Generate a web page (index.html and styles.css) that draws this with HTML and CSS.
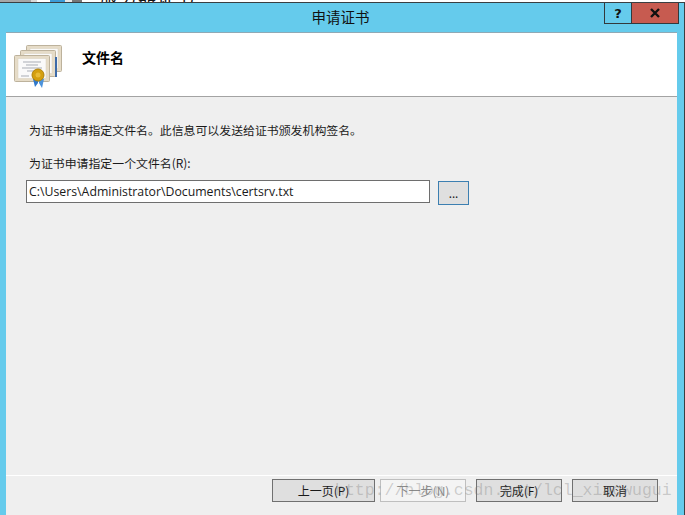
FILE: index.html
```html
<!DOCTYPE html>
<html lang="zh-CN">
<head>
    <meta charset="UTF-8">
    <meta name="viewport" content="width=device-width, initial-scale=1.0">
    <title>申请证书</title>
    <link rel="stylesheet" href="styles.css">
</head>
<body>
    <!-- sliver of the window behind the dialog -->
    <div class="backdrop">
        <span class="seg seg-gray"></span>
        <span class="seg seg-light"></span>
        <span class="seg seg-white"></span>
        <span class="seg seg-blue"></span>
        <span class="seg seg-pale"></span>
        <span class="seg seg-dark"></span>
        <span class="behind-text">服务器证书</span>
    </div>

    <div class="dialog">
        <div class="titlebar">
            <span></span>
            <div class="title">申请证书</div>
            <div class="controls">
                <div class="ctrl ctrl-help">?</div>
                <div class="ctrl ctrl-close">
                    <svg width="12" height="10" viewBox="0 0 12 10">
                        <path d="M2 1 L10 9 M10 1 L2 9" stroke="#111" stroke-width="2.4" fill="none"/>
                    </svg>
                </div>
            </div>
        </div>

        <div class="content">
            <div class="header">
                <svg class="cert-icon" width="48" height="44" viewBox="0 0 48 44">
                    <rect class="cert" x="12.5" y="1.5" width="35" height="26" rx="1"/>
                    <rect class="cert-in" x="16" y="4.5" width="28" height="20"/>
                    <rect class="cert" x="6.5" y="6.5" width="35" height="26" rx="1"/>
                    <rect class="cert-in" x="10" y="9.5" width="28" height="20"/>
                    <path d="M41 13 h2 v20 h-2 z" fill="#3d6aa8"/>
                    <rect class="cert" x="0.5" y="11.5" width="35" height="26" rx="1"/>
                    <rect class="cert-in" x="4" y="14.5" width="28" height="20"/>
                    <path d="M9 18 h18 M12 21 h12 M8 24 h20 M13 27 h9 M7 32 h8" stroke="#a9adb5" stroke-width="1"/>
                    <path d="M19 35 L21 43 L24 39 L24 33 Z" fill="#2f78cc"/>
                    <path d="M30 35 L28 44 L25 39 L25 33 Z" fill="#4c93dc"/>
                    <circle cx="24" cy="31" r="6" fill="#d49f0f" stroke="#b0820a"/>
                    <circle cx="24" cy="31" r="2.5" fill="#e8bb38"/>
                </svg>
                <div class="header-title">文件名</div>
            </div>

            <div class="body">
                <p class="intro">为证书申请指定文件名。此信息可以发送给证书颁发机构签名。</p>
                <label class="field-label" for="filename">为证书申请指定一个文件名(R):</label>
                <div class="file-row">
                    <input class="file-input" id="filename" type="text" value="C:\Users\Administrator\Documents\certsrv.txt">
                    <button class="browse-btn" type="button">...</button>
                </div>
            </div>

            <div class="footer">
                <button class="btn btn-prev" type="button">上一页(P)</button>
                <button class="btn btn-next" type="button" disabled>下一步(N)</button>
                <button class="btn btn-finish" type="button">完成(F)</button>
                <button class="btn btn-cancel" type="button">取消</button>
            </div>
        </div>
    </div>

    <div class="watermark">http://blog.csdn.net/lcl_xiaowugui</div>
</body>
</html>
```

FILE: styles.css
```css
* {
    margin: 0;
    padding: 0;
    box-sizing: border-box;
}

body {
    width: 685px;
    height: 515px;
    overflow: hidden;
    position: relative;
    background: #fff;
    font-family: "Noto Sans CJK SC", "Noto Sans", sans-serif;
    font-size: 12px;
    color: #1a1a1a;
}

.backdrop {
    height: 2px;
    display: flex;
    overflow: hidden;
    position: relative;
    background: #fff;
}

.seg {
    display: block;
    height: 100%;
}

.seg-gray { width: 31px; background: #a6a6a6; }
.seg-light { width: 6px; background: #d8d8d8; }
.seg-white { width: 13px; background: #fff; }
.seg-blue { width: 15px; background: #3d9bd6; }
.seg-pale { width: 7px; background: #e8e8e8; }
.seg-dark { width: 10px; background: #777; }

.behind-text {
    margin: -13px 0 0 18px;
    font-size: 18px;
    line-height: 18px;
    letter-spacing: 1px;
    color: #111;
}

.dialog {
    height: 513px;
    display: flex;
    flex-direction: column;
    background: #65cbec;
    border-top: 1px solid #3a3f42;
    border-right: 1px solid #3a3f42;
}

.titlebar {
    height: 29px;
    flex-shrink: 0;
    display: grid;
    grid-template-columns: 1fr auto 1fr;
    padding-right: 5px;
}

.title {
    padding-left: 2px;
    font-size: 14.5px;
    line-height: 28px;
    color: #111;
}

.controls {
    display: flex;
    justify-self: end;
    height: 21px;
}

.ctrl {
    display: flex;
    align-items: center;
    justify-content: center;
    border: 1px solid #33393c;
    border-top: none;
}

.ctrl-help {
    width: 28px;
    font-family: "DejaVu Sans", sans-serif;
    font-size: 13px;
    font-weight: bold;
    color: #111;
}

.ctrl-close {
    width: 47px;
    border-left: none;
    background: #c75b50;
}

.content {
    flex: 1;
    margin: 0 7px 0 6px;
    display: flex;
    flex-direction: column;
    background: #efefef;
}

.header {
    height: 65px;
    flex-shrink: 0;
    display: flex;
    background: #fff;
    border-top: 1px solid #8fa9b5;
    border-bottom: 1px solid #a3a3a3;
    padding: 11px 0 0 8px;
}

.cert-icon {
    flex-shrink: 0;
}

.cert {
    fill: #e6dcc8;
    stroke: #bdb29c;
}

.cert-in {
    fill: #fafafa;
    stroke: #d8cfbc;
    stroke-width: 0.5;
}

.header-title {
    margin: 3px 0 0 20px;
    font-size: 14px;
    font-weight: bold;
    color: #000;
}

.body {
    flex: 1;
    padding: 24px 0 0 20px;
}

.intro {
    padding-left: 3px;
    font-size: 11.9px;
    line-height: 18px;
}

.field-label {
    display: block;
    margin-top: 15px;
    padding-left: 3px;
    font-size: 11.9px;
    line-height: 18px;
}

.file-row {
    display: flex;
    align-items: flex-start;
    margin-top: 8px;
}

.file-input {
    width: 404px;
    height: 23px;
    padding: 0 2px;
    border: 1px solid #6e6e6e;
    background: #fff;
    font-family: "Open Sans", "Noto Sans", sans-serif;
    font-size: 12.3px;
    color: #1a1a1a;
    outline: none;
}

.browse-btn {
    width: 31px;
    height: 24px;
    margin: 1px 0 0 8px;
    border: 1px solid #3c7fb1;
    background: #dfdfdf;
    font-family: "Noto Sans", sans-serif;
    font-size: 12px;
    color: #1a1a1a;
}

.footer {
    height: 40px;
    flex-shrink: 0;
    display: flex;
    justify-content: flex-end;
    gap: 5px;
    padding: 3px 19px 0 0;
    border-top: 1px solid #fff;
}

.btn {
    width: 86px;
    height: 23px;
    border: 1px solid #707070;
    background: #dfdfdf;
    font-family: "Noto Sans CJK SC", "Noto Sans", sans-serif;
    font-size: 12px;
    color: #1a1a1a;
}

.btn-prev {
    width: 103px;
}

.btn-next {
    background: #f4f4f4;
    border-color: #bfbfbf;
    color: #8a8a8a;
}

.btn-finish,
.btn-cancel {
    margin-left: 5px;
}

/* blog watermark baked over the screenshot */
.watermark {
    position: absolute;
    left: 335px;
    top: 481px;
    font-family: "Liberation Mono", monospace;
    font-size: 16.5px;
    line-height: 20px;
    color: rgba(120, 120, 120, 0.32);
    white-space: nowrap;
}
```
